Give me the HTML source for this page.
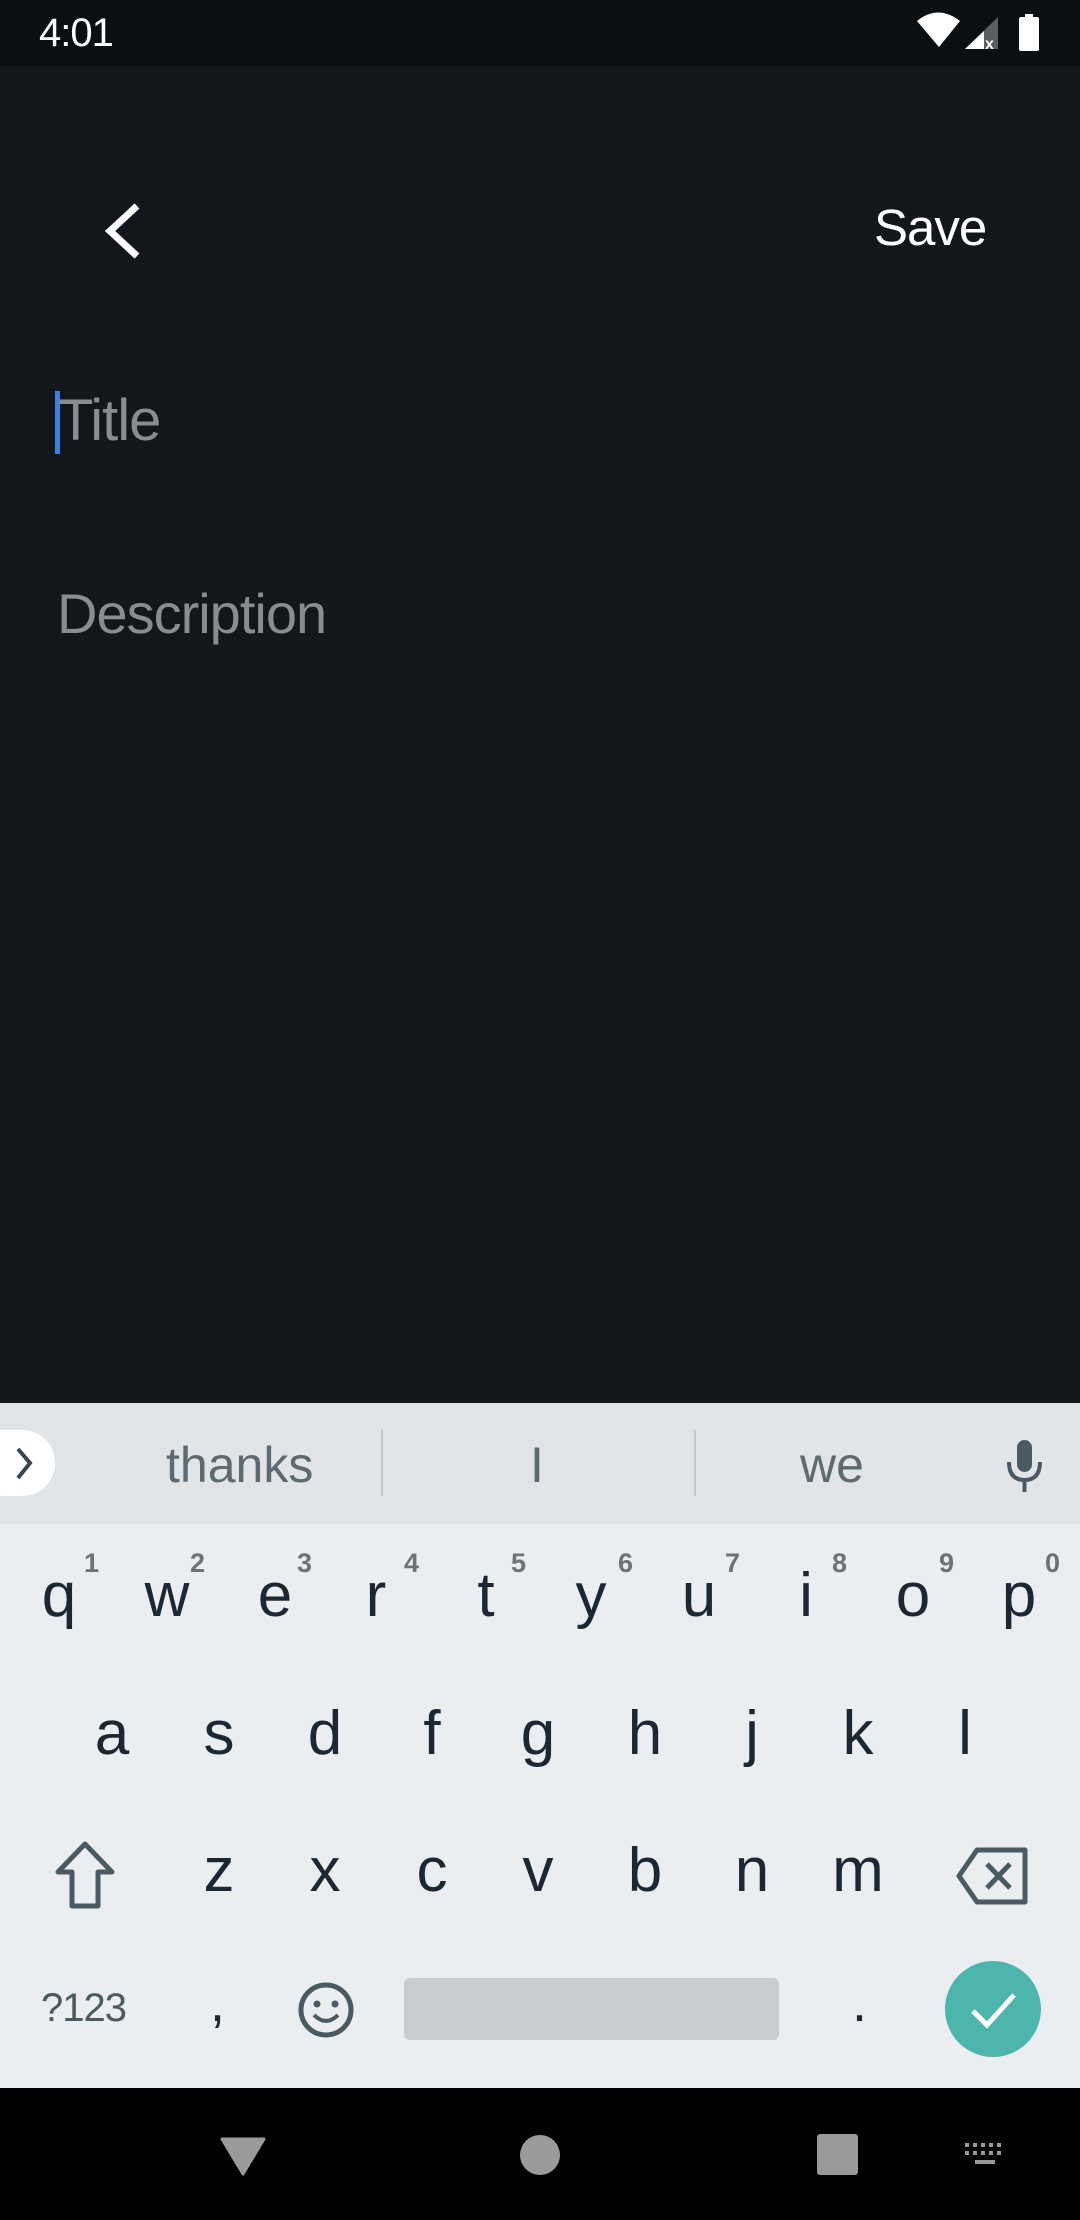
<!DOCTYPE html>
<html><head><meta charset="utf-8"><style>
*{margin:0;padding:0;box-sizing:border-box}
html,body{width:1080px;height:2220px;overflow:hidden;background:#13171b;font-family:"Liberation Sans",sans-serif}
.abs{position:absolute}
.k{position:absolute;width:108px;text-align:center;font-size:62px;color:#1b2833;line-height:1}
.n{position:absolute;font-size:27px;font-weight:bold;color:#6b7378;line-height:1}
</style></head><body>
<div class="abs" style="left:0;top:0;width:1080px;height:66px;background:#0c0f12"></div>
<div class="abs" style="left:39px;top:11px;font-size:40px;color:#fff;line-height:1.1;letter-spacing:-1px">4:01</div>
<svg class="abs" style="left:910px;top:10px" width="140" height="46" viewBox="910 10 140 46">
<path d="M917 21 Q938 4 960 21 L939 47 Z" fill="#fff"/>
<path d="M998 17 L998 49 L965 49 Z" fill="#5b5e61"/>
<path d="M984 31 L984 49 L965 49 Z" fill="#fff"/>
<text x="985" y="49" font-size="16" font-weight="bold" fill="#fff" font-family="Liberation Sans">x</text>
<rect x="1019" y="17" width="20" height="34" rx="2" fill="#fff"/><rect x="1025" y="14" width="8" height="4" fill="#fff"/>
</svg>
<svg class="abs" style="left:95px;top:200px" width="50" height="62"><path d="M42 6 L15 31 L42 56" stroke="#fff" stroke-width="7" fill="none"/></svg>
<div class="abs" style="left:874px;top:202px;font-size:51px;color:#fff;line-height:1;letter-spacing:-1px">Save</div>
<div class="abs" style="left:55px;top:391px;width:5px;height:63px;background:#3f7fe0"></div>
<div class="abs" style="left:58px;top:392px;font-size:58px;color:#8a8d8f;line-height:1;letter-spacing:-1px">Title</div>
<div class="abs" style="left:57px;top:586px;font-size:56px;color:#8a8d8f;line-height:1;letter-spacing:-1px">Description</div>

<div class="abs" style="left:0;top:1403px;width:1080px;height:121px;background:#e1e5e8"></div>
<div class="abs" style="left:0;top:1524px;width:1080px;height:564px;background:#eaeef1"></div>
<div class="abs" style="left:-30px;top:1430px;width:85px;height:66px;border-radius:33px;background:#fff"></div>
<svg class="abs" style="left:10px;top:1445px" width="30" height="40"><path d="M8 4 L20 18 L8 33" stroke="#37474f" stroke-width="4" fill="none"/></svg>
<div class="abs" style="left:166px;top:1440px;font-size:50px;color:#5d6a72;line-height:1">thanks</div>
<div class="abs" style="left:381px;top:1430px;width:2px;height:66px;background:#c4c9cc"></div>
<div class="abs" style="left:530px;top:1440px;font-size:50px;color:#5d6a72;line-height:1">I</div>
<div class="abs" style="left:694px;top:1430px;width:2px;height:66px;background:#c4c9cc"></div>
<div class="abs" style="left:800px;top:1440px;font-size:50px;color:#5d6a72;line-height:1">we</div>
<svg class="abs" style="left:1005px;top:1438px" width="40" height="56"><rect x="12" y="2" width="15" height="32" rx="7.5" fill="#4a5a63"/><path d="M4 24 Q4 42 19.5 42 Q35 42 35 24" stroke="#4a5a63" stroke-width="4" fill="none"/><rect x="17.5" y="40" width="4" height="14" fill="#4a5a63"/></svg>

<div class="k" style="left:5px;top:1565px">q</div><div class="k" style="left:113px;top:1565px">w</div><div class="k" style="left:221px;top:1565px">e</div><div class="k" style="left:322px;top:1565px">r</div><div class="k" style="left:432px;top:1565px">t</div><div class="k" style="left:537px;top:1565px">y</div><div class="k" style="left:645px;top:1565px">u</div><div class="k" style="left:752px;top:1565px">i</div><div class="k" style="left:859px;top:1565px">o</div><div class="k" style="left:965px;top:1565px">p</div>
<div class="n" style="left:84px;top:1550px">1</div><div class="n" style="left:190px;top:1550px">2</div><div class="n" style="left:297px;top:1550px">3</div><div class="n" style="left:404px;top:1550px">4</div><div class="n" style="left:511px;top:1550px">5</div><div class="n" style="left:618px;top:1550px">6</div><div class="n" style="left:725px;top:1550px">7</div><div class="n" style="left:832px;top:1550px">8</div><div class="n" style="left:939px;top:1550px">9</div><div class="n" style="left:1045px;top:1550px">0</div>
<div class="k" style="left:58px;top:1703px">a</div><div class="k" style="left:165px;top:1703px">s</div><div class="k" style="left:271px;top:1703px">d</div><div class="k" style="left:378px;top:1703px">f</div><div class="k" style="left:484px;top:1703px">g</div><div class="k" style="left:591px;top:1703px">h</div><div class="k" style="left:698px;top:1703px">j</div><div class="k" style="left:804px;top:1703px">k</div><div class="k" style="left:911px;top:1703px">l</div>
<svg class="abs" style="left:52px;top:1840px" width="66" height="72"><path d="M33 4 L60 32 L46 32 L46 66 L20 66 L20 32 L6 32 Z" stroke="#4a5a63" stroke-width="5" fill="none" stroke-linejoin="round"/></svg>
<div class="k" style="left:165px;top:1840px">z</div><div class="k" style="left:271px;top:1840px">x</div><div class="k" style="left:378px;top:1840px">c</div><div class="k" style="left:484px;top:1840px">v</div><div class="k" style="left:591px;top:1840px">b</div><div class="k" style="left:698px;top:1840px">n</div><div class="k" style="left:804px;top:1840px">m</div>
<svg class="abs" style="left:955px;top:1846px" width="76" height="62"><path d="M22 4 L70 4 L70 56 L22 56 L4 30 Z" stroke="#4a5a63" stroke-width="5" fill="none" stroke-linejoin="round"/><path d="M32 18 L55 42 M55 18 L32 42" stroke="#4a5a63" stroke-width="5"/></svg>
<div class="abs" style="left:41px;top:1988px;font-size:40px;color:#4a5a63;line-height:1;letter-spacing:-1px">?123</div>
<div class="abs" style="left:210px;top:1976px;font-size:54px;color:#1b2833;line-height:1">,</div>
<svg class="abs" style="left:296px;top:1980px" width="60" height="60"><circle cx="30" cy="30" r="25" stroke="#4a5a63" stroke-width="5" fill="none"/><circle cx="21" cy="24" r="3.5" fill="#4a5a63"/><circle cx="39" cy="24" r="3.5" fill="#4a5a63"/><path d="M18 35 Q30 47 42 35" stroke="#4a5a63" stroke-width="4" fill="none"/></svg>
<div class="abs" style="left:404px;top:1978px;width:375px;height:62px;border-radius:6px;background:#c8cdd0"></div>
<div class="abs" style="left:852px;top:1976px;font-size:54px;color:#1b2833;line-height:1">.</div>
<div class="abs" style="left:945px;top:1961px;width:96px;height:96px;border-radius:50%;background:#4db6ac"></div>
<svg class="abs" style="left:965px;top:1981px" width="56" height="56"><path d="M8 30 L22 44 L49 14" stroke="#fff" stroke-width="5" fill="none"/></svg>

<div class="abs" style="left:0;top:2088px;width:1080px;height:132px;background:#000"></div>
<svg class="abs" style="left:0;top:2120px" width="1080" height="72"><path d="M222 19 L264 19 L243 54 Z" fill="#9a9a9a" stroke="#9a9a9a" stroke-width="3" stroke-linejoin="round"/><circle cx="540" cy="35" r="20" fill="#9a9a9a"/><rect x="817" y="14" width="41" height="41" rx="3" fill="#9a9a9a"/>
<g fill="#9a9a9a"><rect x="965" y="23" width="4" height="4"/><rect x="973" y="23" width="4" height="4"/><rect x="981" y="23" width="4" height="4"/><rect x="989" y="23" width="4" height="4"/><rect x="997" y="23" width="4" height="4"/><rect x="965" y="31" width="4" height="4"/><rect x="973" y="31" width="4" height="4"/><rect x="981" y="31" width="4" height="4"/><rect x="989" y="31" width="4" height="4"/><rect x="997" y="31" width="4" height="4"/><rect x="975" y="40" width="20" height="4"/></g></svg>
</body></html>
